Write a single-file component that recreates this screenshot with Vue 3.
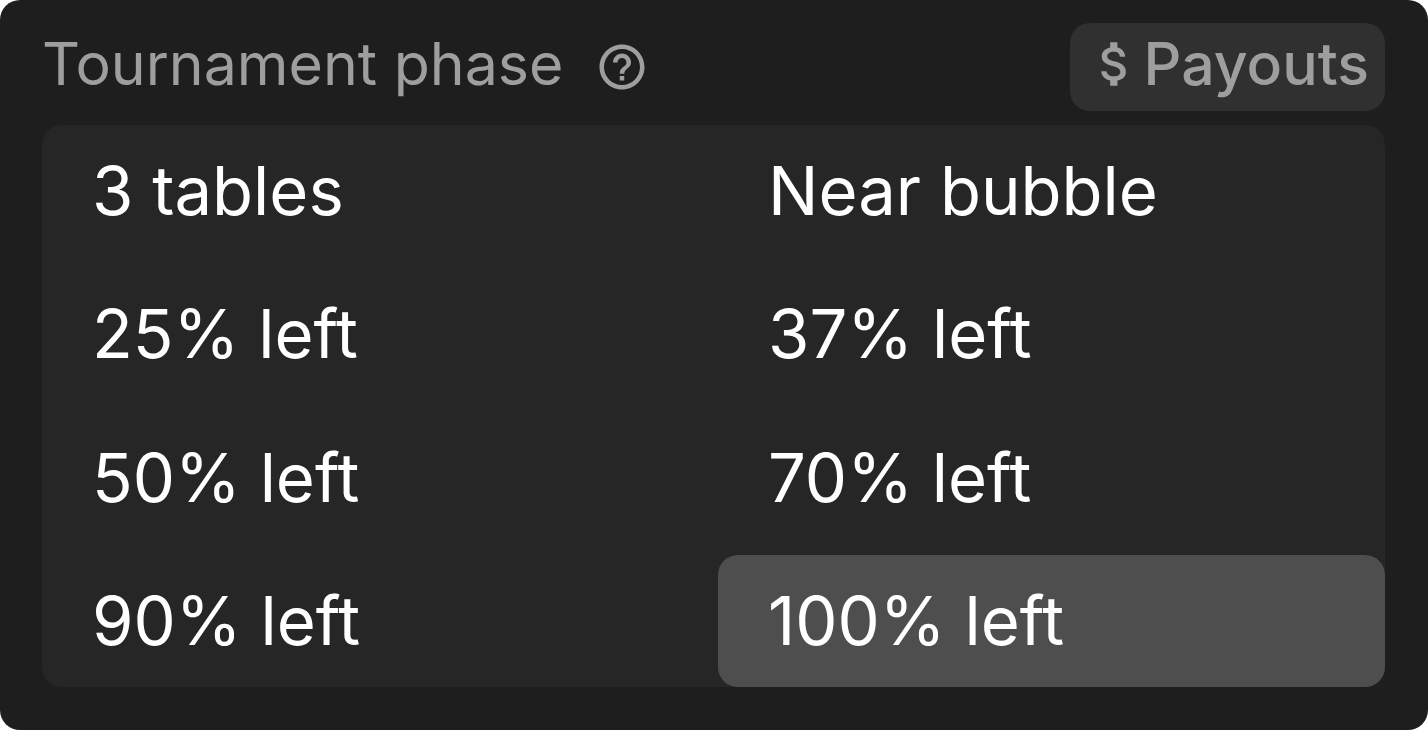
<script setup>
import { ref } from 'vue'

const phases = [
  '3 tables', 'Near bubble',
  '25% left', '37% left',
  '50% left', '70% left',
  '90% left', '100% left',
]
const selected = ref('100% left')
</script>

<template>
  <main class="card">
    <header class="head">
      <h1 class="title">Tournament phase</h1>
      <button class="help" type="button" aria-label="Help">
        <svg viewBox="0 0 24 24" width="54" height="54" fill="currentColor" aria-hidden="true">
          <path d="M11 18h2v-2h-2v2zm1-16C6.48 2 2 6.48 2 12s4.480 10 10 10 10-4.480 10-10S17.520 2 12 2zm0 18c-4.410 0-8-3.590-8-8s3.590-8 8-8 8 3.590 8 8-3.590 8-8 8zm0-14c-2.210 0-4 1.790-4 4h2c0-1.100.9-2 2-2s2 .9 2 2c0 2-3 1.750-3 5h2c0-2.250 3-2.500 3-5 0-2.210-1.790-4-4-4z" />
        </svg>
      </button>
      <button class="payouts" type="button">
        <svg viewBox="0 0 24 24" width="58" height="58" fill="currentColor" aria-hidden="true">
          <path d="M11.800 10.900c-2.270-.59-3-1.200-3-2.150 0-1.090 1.010-1.850 2.700-1.850 1.780 0 2.440.85 2.500 2.100h2.210c-.07-1.720-1.120-3.300-3.210-3.810V3h-3v2.160c-1.940.42-3.500 1.680-3.500 3.610 0 2.310 1.910 3.460 4.700 4.130 2.500.6 3 1.480 3 2.410 0 .69-.49 1.790-2.700 1.790-2.060 0-2.870-.92-2.980-2.100h-2.200c.12 2.190 1.760 3.420 3.680 3.830V21h3v-2.150c1.950-.37 3.500-1.500 3.500-3.550 0-2.840-2.430-3.810-4.700-4.400z" />
        </svg>
        <span>Payouts</span>
      </button>
    </header>
    <section class="phases" aria-label="Tournament phase">
      <button
        v-for="phase in phases"
        :key="phase"
        type="button"
        class="phase"
        :class="{ active: phase === selected }"
        :aria-pressed="phase === selected"
        @click="selected = phase"
      >{{ phase }}</button>
    </section>
  </main>
</template>

<style>
body {
  background: #fff;
}
</style>

<style scoped>
.card {
  box-sizing: border-box;
  min-height: 100vh;
  padding: 23px 43px 43px 42px;
  border-radius: 20px;
  background: #1e1e1e;
  font-family: Inter, "Liberation Sans", sans-serif;
  display: flex;
  flex-direction: column;
  gap: 14px;
}
button {
  border: 0;
  padding: 0;
  background: none;
  color: inherit;
  font: inherit;
  cursor: pointer;
}
svg {
  display: block;
  flex: none;
}
.head {
  display: flex;
  align-items: center;
  height: 88px;
  color: #9e9e9e;
}
.title {
  margin: 0;
  font-size: 59px;
  font-weight: 400;
  line-height: 82px;
  height: 88px;
}
.help {
  margin-left: 32px;
}
.payouts {
  display: flex;
  align-items: center;
  box-sizing: border-box;
  height: 88px;
  margin-left: auto;
  padding: 0 16px 6px;
  border-radius: 20px;
  background: #303030;
  font-size: 59px;
  font-weight: 500;
  line-height: 82px;
}
.phases {
  flex: 1;
  display: grid;
  grid-template-columns: 676fr 667fr;
  grid-auto-rows: 1fr;
  row-gap: 11px;
  border-radius: 20px;
  background: #262626;
}
.phase {
  padding: 0 50px;
  border-radius: 20px;
  color: #fff;
  font-size: 67px;
  line-height: 84px;
  text-align: left;
}
.active {
  background: #4e4e4e;
}
</style>
